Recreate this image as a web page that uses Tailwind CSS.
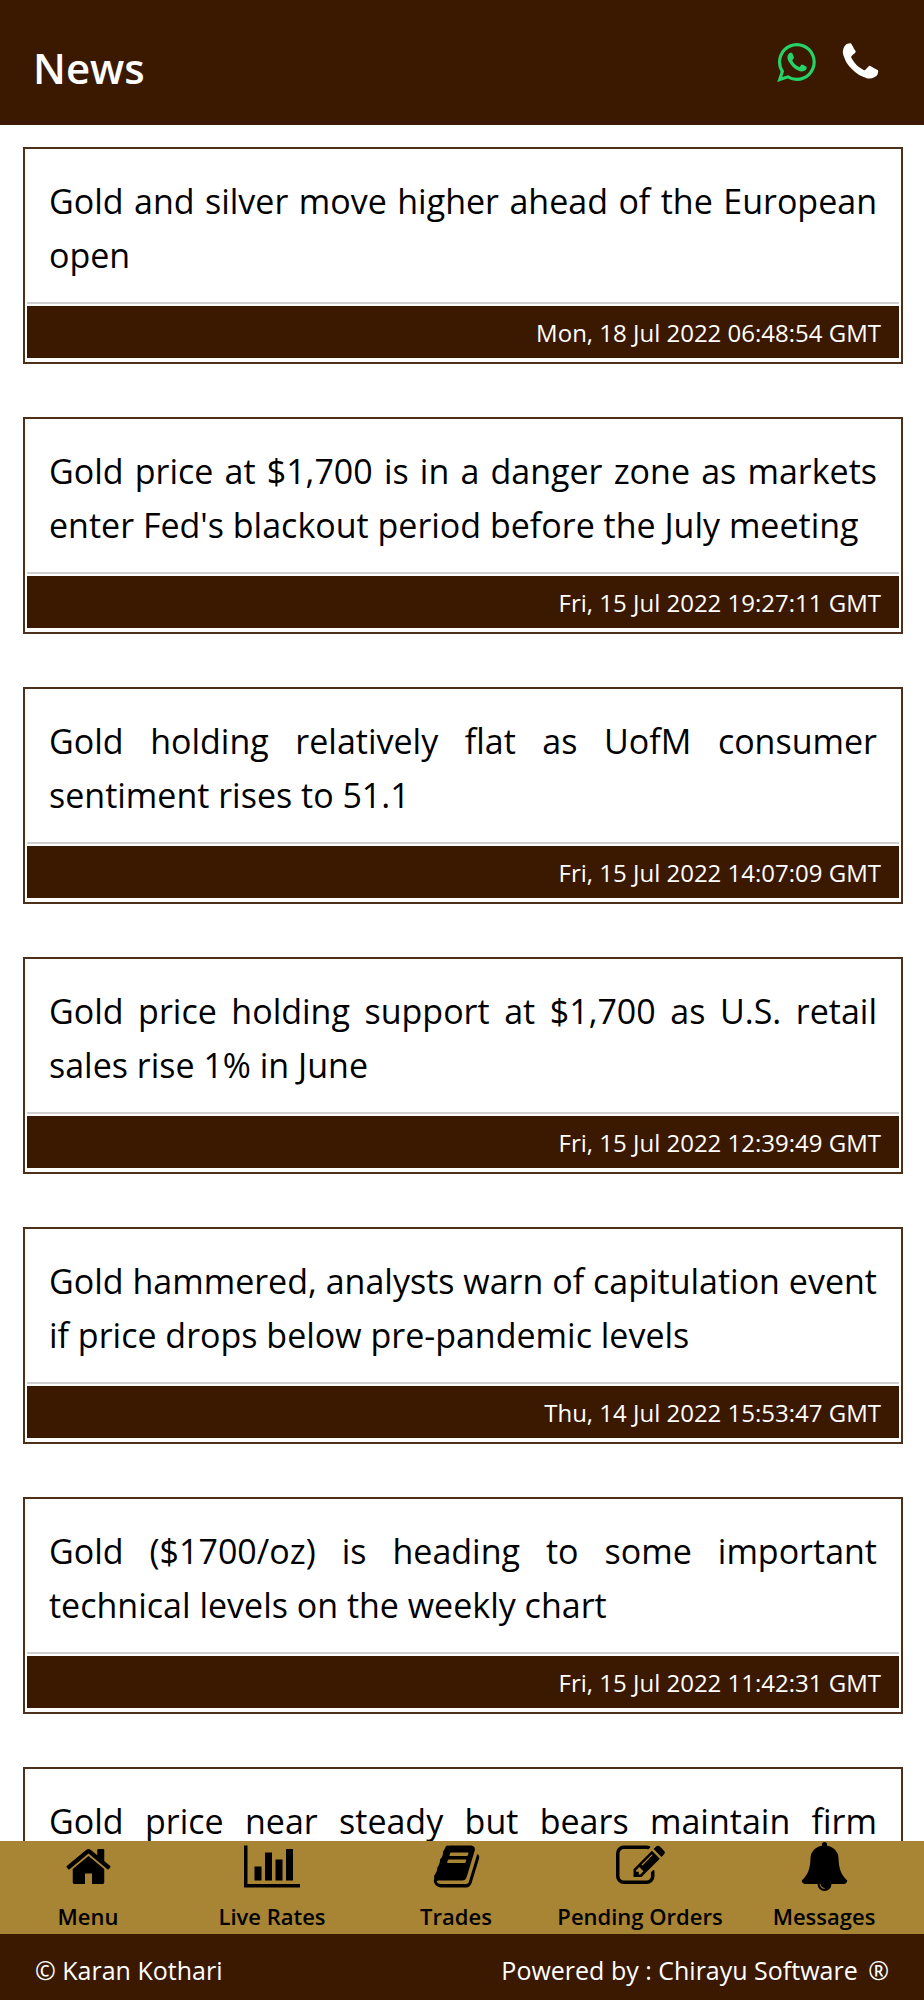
<!DOCTYPE html>
<html lang="en">
<head>
    <meta charset="UTF-8">
    <meta name="viewport" content="width=device-width, initial-scale=1.0">
    <title>News</title>
    <script src="https://cdn.jsdelivr.net/npm/@tailwindcss/browser@4"></script>
</head>
<body class="h-screen flex flex-col overflow-hidden bg-white text-black font-['Open_Sans',sans-serif]">
    <header class="shrink-0 flex items-start justify-between h-[125px] pl-[33px] pr-[41px] pt-10 bg-[#3a1900]">
        <h1 class="text-[42px] leading-[56px] font-semibold text-white">News</h1>
        <div class="flex gap-[19px]">
            <a href="#whatsapp" aria-label="WhatsApp" class="text-[#25d366]">
                <svg class="block size-[45px]" viewBox="0 0 1792 1792" fill="currentColor"><path d="M1113 974q13 0 97.5 44t89.5 53q2 5 2 15 0 33-17 76-16 39-71 65.5t-102 26.5q-57 0-190-62-98-45-170-118t-148-185q-72-107-71-194v-8q3-91 74-158 24-22 52-22 6 0 18 1.5t19 1.5q19 0 26.5 6.5t15.5 27.5q8 20 33 88t25 75q0 21-34.5 57.5t-34.5 46.5q0 7 5 15 34 73 102 137 56 53 151 101 12 7 22 7 15 0 54-48.5t52-48.5zm-203 530q127 0 243.5-50t200.5-134 134-200.5 50-243.5-50-243.5-134-200.5-200.5-134-243.5-50-243.5 50-200.5 134-134 200.5-50 243.5q0 203 120 368l-79 233 242-77q158 104 345 104zm0-1382q153 0 292.5 60t240.5 161 161 240.5 60 292.5-60 292.5-161 240.5-240.5 161-292.5 60q-195 0-365-94l-417 134 136-405q-108-178-108-389 0-153 60-292.5t161-240.5 240.5-161 292.5-60z"/></svg>
            </a>
            <a href="#call" aria-label="Call" class="text-white">
                <svg class="block size-[45px]" viewBox="0 0 1792 1792" fill="currentColor"><path d="M1600 1240q0 27-10 70.5t-21 68.5q-21 50-122 106-94 51-186 51-27 0-53-3.5t-57.5-12.5-47-14.5-55.5-20.5-49-18q-98-35-175-83-127-79-264-216t-216-264q-48-77-83-175-3-9-18-49t-20.5-55.5-14.5-47-12.5-57.5-3.5-53q0-92 51-186 56-101 106-122 25-11 68.5-21t70.5-10q14 0 21 3 18 6 53 76 11 19 30 54t35 63.5 31 53.5q3 4 17.5 25t21.5 35.5 7 28.5q0 20-28.5 50t-62 55-62 53-28.5 46q0 9 5 22.5t8.5 20.5 14 24 11.5 19q76 137 174 235t235 174q2 1 19 11.5t24 14 20.5 8.5 22.5 5q18 0 46-28.5t53-62 55-62 50-28.5q14 0 28.5 7t35.5 21.5 25 17.5q25 15 53.5 31t63.5 35 54 30q70 35 76 53 3 7 3 21z"/></svg>
            </a>
        </div>
    </header>

    <main class="flex-1 min-h-0 flex flex-col gap-[53px] pl-[23px] pr-[21px] pt-[22px] overflow-y-auto [scrollbar-width:none]">
        <article class="shrink-0 border-2 border-[#4e2f1a] pt-0.5 px-0.5 pb-1">
            <p class="px-[22px] pt-[23px] pb-5 text-[34px] leading-[54px] text-justify">Gold and silver move higher ahead of the European open</p>
            <div class="border-t-2 border-[#d0d0d0] pt-0.5">
                <p class="bg-[#3a1900] px-[18px] pt-2.5 pb-2 text-right text-[24px] leading-[34px] text-white">Mon, 18 Jul 2022 06:48:54 GMT</p>
            </div>
        </article>
        <article class="shrink-0 border-2 border-[#4e2f1a] pt-0.5 px-0.5 pb-1">
            <p class="px-[22px] pt-[23px] pb-5 text-[34px] leading-[54px] text-justify">Gold price at $1,700 is in a danger zone as markets enter Fed's blackout period before the July meeting</p>
            <div class="border-t-2 border-[#d0d0d0] pt-0.5">
                <p class="bg-[#3a1900] px-[18px] pt-2.5 pb-2 text-right text-[24px] leading-[34px] text-white">Fri, 15 Jul 2022 19:27:11 GMT</p>
            </div>
        </article>
        <article class="shrink-0 border-2 border-[#4e2f1a] pt-0.5 px-0.5 pb-1">
            <p class="px-[22px] pt-[23px] pb-5 text-[34px] leading-[54px] text-justify">Gold holding relatively flat as UofM consumer sentiment rises to 51.1</p>
            <div class="border-t-2 border-[#d0d0d0] pt-0.5">
                <p class="bg-[#3a1900] px-[18px] pt-2.5 pb-2 text-right text-[24px] leading-[34px] text-white">Fri, 15 Jul 2022 14:07:09 GMT</p>
            </div>
        </article>
        <article class="shrink-0 border-2 border-[#4e2f1a] pt-0.5 px-0.5 pb-1">
            <p class="px-[22px] pt-[23px] pb-5 text-[34px] leading-[54px] text-justify">Gold price holding support at $1,700 as U.S. retail sales rise 1% in June</p>
            <div class="border-t-2 border-[#d0d0d0] pt-0.5">
                <p class="bg-[#3a1900] px-[18px] pt-2.5 pb-2 text-right text-[24px] leading-[34px] text-white">Fri, 15 Jul 2022 12:39:49 GMT</p>
            </div>
        </article>
        <article class="shrink-0 border-2 border-[#4e2f1a] pt-0.5 px-0.5 pb-1">
            <p class="px-[22px] pt-[23px] pb-5 text-[34px] leading-[54px] text-justify">Gold hammered, analysts warn of capitulation event if price drops below pre-pandemic levels</p>
            <div class="border-t-2 border-[#d0d0d0] pt-0.5">
                <p class="bg-[#3a1900] px-[18px] pt-2.5 pb-2 text-right text-[24px] leading-[34px] text-white">Thu, 14 Jul 2022 15:53:47 GMT</p>
            </div>
        </article>
        <article class="shrink-0 border-2 border-[#4e2f1a] pt-0.5 px-0.5 pb-1">
            <p class="px-[22px] pt-[23px] pb-5 text-[34px] leading-[54px] text-justify">Gold ($1700/oz) is heading to some important technical levels on the weekly chart</p>
            <div class="border-t-2 border-[#d0d0d0] pt-0.5">
                <p class="bg-[#3a1900] px-[18px] pt-2.5 pb-2 text-right text-[24px] leading-[34px] text-white">Fri, 15 Jul 2022 11:42:31 GMT</p>
            </div>
        </article>
        <article class="shrink-0 border-2 border-[#4e2f1a] pt-0.5 px-0.5 pb-1">
            <p class="px-[22px] pt-[23px] pb-5 text-[34px] leading-[54px] text-justify [text-align-last:justify]">Gold price near steady but bears maintain firm</p>
        </article>
    </main>

    <nav class="shrink-0 -ml-1 pr-2 pt-px h-[93px] grid grid-cols-5 bg-[#a88435] text-[22px] leading-[30px] font-semibold">
        <a href="#menu" class="flex flex-col items-center gap-2.5 whitespace-nowrap">
            <svg class="h-[49px] w-[49px]" viewBox="0 0 1792 1792" fill="currentColor"><path d="M1472 992v480q0 26-19 45t-45 19h-384v-384h-256v384h-384q-26 0-45-19t-19-45v-480q0-1 .5-3t.5-3l575-474 575 474q1 2 1 6zm223-69l-62 74q-8 9-21 11h-3q-13 0-21-7l-692-577-692 577q-12 8-24 7-13-2-21-11l-62-74q-8-10-7-23.5t11-21.5l719-599q32-26 76-26t76 26l244 204v-195q0-14 9-23t23-9h192q14 0 23 9t9 23v408l219 182q10 8 11 21.5t-7 23.5z"/></svg>
            Menu
        </a>
        <a href="#rates" class="flex flex-col items-center gap-2.5 whitespace-nowrap">
            <svg class="h-[49px] w-14" viewBox="0 0 2048 1792" fill="currentColor"><path d="M640 896v512h-256v-512h256zm384-512v1024h-256v-1024h256zm1024 1152v128h-2048v-1536h128v1408h1920zm-640-896v768h-256v-768h256zm384-384v1152h-256v-1152h256z"/></svg>
            Live Rates
        </a>
        <a href="#trades" class="flex flex-col items-center gap-2.5 whitespace-nowrap">
            <svg class="h-[49px] w-[49px]" viewBox="0 0 1792 1792" fill="currentColor"><path d="M1703 478q40 57 18 129l-275 906q-19 64-76.5 107.5t-122.5 43.5h-923q-77 0-148.5-53.5t-99.5-131.5q-24-67-2-127 0-4 3-27t4-37q1-8-3-21.5t-3-19.5q2-11 8-21t16.5-23.5 16.5-23.5q23-38 45-91.5t30-91.5q3-10 .5-30t-.5-28q3-11 17-28t17-23q21-36 42-92t25-90q1-9-2.5-32t.5-28q4-13 22-30.5t22-22.5q19-26 42.5-84.5t27.5-96.5q1-8-3-25.5t-2-26.5q2-8 9-18t18-23 17-21q8-12 16.5-30.5t15-35 16-36 19.5-32 26.5-23.5 36-11.5 47.5 5.5l-1 3q38-9 51-9h761q74 0 114 56t18 130l-274 906q-36 119-71.5 153.5t-128.5 34.5h-869q-27 0-38 15-11 16-1 43 24 70 144 70h923q29 0 56-15.5t35-41.5l300-987q7-22 5-57 38 15 59 43zm-1064 2q-4 13 2 22.5t20 9.5h608q13 0 25.5-9.5t16.5-22.5l21-64q4-13-2-22.5t-20-9.5h-608q-13 0-25.5 9.5t-16.5 22.5zm-83 256q-4 13 2 22.5t20 9.5h608q13 0 25.5-9.5t16.5-22.5l21-64q4-13-2-22.5t-20-9.5h-608q-13 0-25.5 9.5t-16.5 22.5z"/></svg>
            Trades
        </a>
        <a href="#orders" class="flex flex-col items-center gap-2.5 whitespace-nowrap">
            <svg class="h-[49px] w-[49px]" viewBox="0 0 1792 1792" fill="currentColor"><path d="M888 1184l116-116-152-152-116 116v56h96v96h56zm440-720q-16-16-33 1l-350 350q-17 17-1 33t33-1l350-350q17-17 1-33zm80 594v190q0 119-84.5 203.5t-203.5 84.5h-832q-119 0-203.5-84.5t-84.5-203.5v-832q0-119 84.5-203.5t203.5-84.5h832q63 0 117 25 15 7 18 23 3 17-9 29l-49 49q-14 14-32 8-23-6-45-6h-832q-66 0-113 47t-47 113v832q0 66 47 113t113 47h832q66 0 113-47t47-113v-126q0-13 9-22l64-64q15-15 35-7t20 29zm-96-738l288 288-672 672h-288v-288zm444 132l-92 92-288-288 92-92q28-28 68-28t68 28l152 152q28 28 28 68t-28 68z"/></svg>
            Pending Orders
        </a>
        <a href="#messages" class="flex flex-col items-center gap-2.5 whitespace-nowrap">
            <svg class="h-[49px] w-[49px]" viewBox="0 0 1792 1792" fill="currentColor"><path d="M912 1696q0-16-16-16-59 0-101.5-42.5t-42.5-101.5q0-16-16-16t-16 16q0 73 51.5 124.5t124.5 51.5q16 0 16-16zm816-288q0 52-38 90t-90 38h-448q0 106-75 181t-181 75-181-75-75-181h-448q-52 0-90-38t-38-90q50-42 91-88t85-119.5 74.5-158.5 50-206 19.5-260q0-152 117-282.5t307-158.5q-8-19-8-39 0-40 28-68t68-28 68 28 28 68q0 20-8 39 190 28 307 158.5t117 282.5q0 139 19.5 260t50 206 74.5 158.5 85 119.5 91 88z"/></svg>
            Messages
        </a>
    </nav>

    <footer class="shrink-0 h-[66px] px-[35px] pt-[17px] flex justify-between bg-[#3a1900] text-[25px] leading-[38px] text-white">
        <p>© Karan Kothari</p>
        <p>Powered by : Chirayu Software <span class="ml-1">®</span></p>
    </footer>
</body>
</html>
